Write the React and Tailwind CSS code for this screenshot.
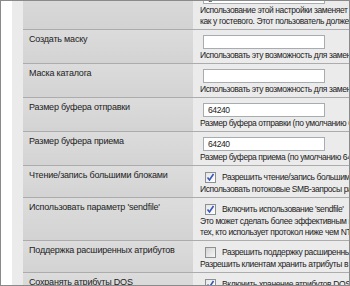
import React from 'react';

const rows = [
  {
    label: 'Создать маску',
    type: 'input',
    value: '',
    desc: ['Использовать эту возможность для замены маски создания файлов'],
  },
  {
    label: 'Маска каталога',
    type: 'input',
    value: '',
    desc: ['Использовать эту возможность для замены маски создания каталогов'],
  },
  {
    label: 'Размер буфера отправки',
    type: 'input',
    value: '64240',
    desc: ['Размер буфера отправки (по умолчанию 64240)'],
  },
  {
    label: 'Размер буфера приема',
    type: 'input',
    value: '64240',
    desc: ['Размер буфера приема (по умолчанию 64240)'],
  },
  {
    label: 'Чтение/запись большими блоками',
    type: 'check',
    checked: true,
    text: 'Разрешить чтение/запись большими блоками',
    desc: ['Использовать потоковые SMB-запросы размером до 64 КБ'],
  },
  {
    label: "Использовать параметр 'sendfile'",
    type: 'check',
    checked: true,
    text: "Включить использование 'sendfile'",
    desc: [
      'Это может сделать более эффективным использование процессора для',
      'тех, кто использует протокол ниже чем NT1',
    ],
  },
  {
    label: 'Поддержка расширенных атрибутов',
    type: 'check',
    checked: false,
    text: 'Разрешить поддержку расширенных атрибутов',
    desc: ['Разрешить клиентам хранить атрибуты в файловой системе'],
  },
  {
    label: 'Сохранять атрибуты DOS',
    type: 'check',
    checked: true,
    text: 'Включить хранение атрибутов DOS',
    desc: ['Сохранять атрибуты DOS в расширенных атрибутах'],
  },
];

function Checkbox({ checked }) {
  return (
    <span
      className={`w-[11px] h-[11px] border border-[#8e8f8f] shrink-0 flex items-center justify-center ${
        checked ? 'bg-gradient-to-br from-[#e6e6e6] to-white' : 'bg-gradient-to-br from-[#d4d4d4] to-[#f6f6f6]'
      }`}
    >
      {checked && (
        <svg width="9" height="9" viewBox="0 0 9 9">
          <path d="M1.5 4.5 L3.5 7 L7.5 1" fill="none" stroke="#3656b8" strokeWidth="1.6" />
        </svg>
      )}
    </span>
  );
}

function Row({ row, first }) {
  const isInput = row.type === 'input';
  return (
    <div
      className={`flex shrink-0 ${first ? '-mt-[16px]' : 'border-t border-[#acacac] shadow-[inset_0_1px_0_#efefef]'}`}
    >
      <div className="w-[170px] shrink-0 bg-gradient-to-b from-[#dcdcdc] to-[#d3d3d3] pl-[6px] pt-[4px] leading-[11px] tracking-[-0.2px]">
        {row.label}
      </div>
      <div className="flex-1 min-w-0 bg-[#ebebeb] pt-[5px] pb-[2px] pl-[7px] whitespace-nowrap text-[8.5px] tracking-[-0.4px]">
        {isInput ? (
          <div className="ml-[3px] w-[122px] h-[14px] bg-white border border-[#a5acb2] pl-[4px] leading-[12px] mb-[1px]">
            {row.value}
          </div>
        ) : (
          <div className="ml-[5px] h-[13px] flex items-center gap-[6px] leading-[11px]">
            <Checkbox checked={row.checked} />
            <span>{row.text}</span>
          </div>
        )}
        {row.desc.map((d) => (
          <div key={d} className="leading-[11px]">
            {d}
          </div>
        ))}
      </div>
    </div>
  );
}

export default function App() {
  const top = {
    label: '',
    type: 'input',
    value: 'guest',
    desc: [
      'Использование этой настройки заменяет пользователя по умолчанию',
      'как у гостевого. Этот пользователь должен существовать в системе',
    ],
  };

  return (
    <div className="w-[350px] h-[286px] border border-[#8a8a8a] bg-white flex overflow-hidden text-[#222] text-[9px] font-['Liberation_Sans',Arial,sans-serif]">
      <div className="w-[11px] shrink-0 bg-white" />
      <div className="w-[11px] shrink-0 bg-[#ebebeb]" />
      <div className="flex-1 min-w-0 flex flex-col overflow-hidden">
        <Row row={top} first />
        {rows.map((r) => (
          <Row key={r.label} row={r} />
        ))}
      </div>
    </div>
  );
}
